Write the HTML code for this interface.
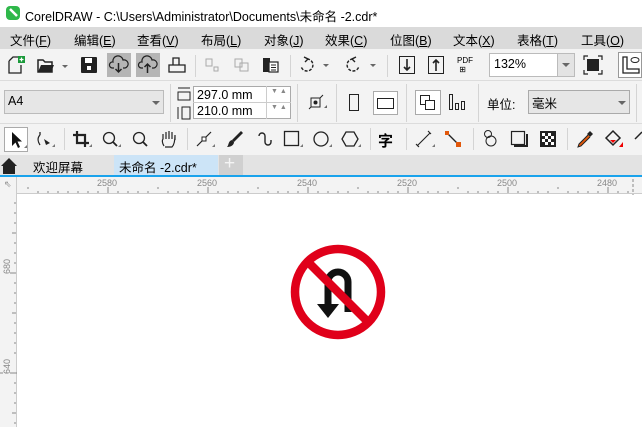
<!DOCTYPE html>
<html><head><meta charset="utf-8">
<style>
*{margin:0;padding:0;box-sizing:border-box}
body{width:642px;height:427px;overflow:hidden;background:#fff;font-family:"Liberation Sans","Noto Sans CJK SC",sans-serif;font-size:12px;color:#000;position:relative}
.a{position:absolute}
.t{position:absolute;white-space:nowrap}
.sep{position:absolute;width:1px;background:#d4d4d4}
svg{position:absolute;overflow:visible}
</style></head><body>
<!-- title bar -->
<div class="a" style="left:0;top:0;width:642px;height:27px;background:#fff"></div>
<div class="a" style="left:6px;top:6px;width:14px;height:14px;border-radius:4px;background:#2fb84a"></div>
<svg style="left:6px;top:6px" width="14" height="14"><path d="M4 3 L11 10" stroke="#fff" stroke-width="2.5"/></svg>
<div class="t" style="left:25px;top:6px;font-size:12.5px">CorelDRAW - C:\Users\Administrator\Documents\未命名 -2.cdr*</div>
<!-- menu -->
<div class="a" style="left:0;top:27px;width:642px;height:22px;background:#dadada"></div>
<div class="t" style="left:10px;top:30px;font-size:12.5px">文件(<u>F</u>)</div>
<div class="t" style="left:74px;top:30px;font-size:12.5px">编辑(<u>E</u>)</div>
<div class="t" style="left:137px;top:30px;font-size:12.5px">查看(<u>V</u>)</div>
<div class="t" style="left:201px;top:30px;font-size:12.5px">布局(<u>L</u>)</div>
<div class="t" style="left:264px;top:30px;font-size:12.5px">对象(<u>J</u>)</div>
<div class="t" style="left:325px;top:30px;font-size:12.5px">效果(<u>C</u>)</div>
<div class="t" style="left:390px;top:30px;font-size:12.5px">位图(<u>B</u>)</div>
<div class="t" style="left:453px;top:30px;font-size:12.5px">文本(<u>X</u>)</div>
<div class="t" style="left:517px;top:30px;font-size:12.5px">表格(<u>T</u>)</div>
<div class="t" style="left:581px;top:30px;font-size:12.5px">工具(<u>O</u>)</div>
<!-- toolbar 1 -->
<div class="a" style="left:0;top:49px;width:642px;height:32px;background:#f3f3f3;border-bottom:1px solid #dcdcdc"></div>
<svg style="left:8px;top:56px" width="18" height="18"><path d="M1 5 L5 1 L10 1 M1 5 V17 H13 V9" fill="none" stroke="#222" stroke-width="1.3"/><rect x="10" y="0" width="7" height="7" fill="#1a9a3a"/><path d="M13.5 1.5v4M11.5 3.5h4" stroke="#fff" stroke-width="1.2"/></svg>
<svg style="left:37px;top:58px" width="30" height="16"><path d="M1 2 H6 L8 4 H15 V14 H1 Z" fill="none" stroke="#222" stroke-width="1.5"/><path d="M1 14 L4 7 H17 L14 14" fill="#222"/><path d="M25 7 L31 7 L28 10Z" fill="#666"/></svg>
<svg style="left:81px;top:57px" width="16" height="16"><rect x="0" y="0" width="16" height="16" rx="1" fill="#222"/><rect x="4" y="1" width="7" height="5" fill="#fff"/><rect x="6" y="9" width="4" height="4" fill="#fff"/></svg>
<div class="a" style="left:107px;top:53px;width:24px;height:24px;background:#b5b5b5"></div>
<svg style="left:109px;top:56px" width="20" height="18"><path d="M5 12 H3 A3 3 0 0 1 4 6 A5 5 0 0 1 14 4 A4 4 0 0 1 16 12 H14" fill="none" stroke="#222" stroke-width="1.2"/><path d="M9.5 7 V16 M6.5 13 L9.5 16 L12.5 13" fill="none" stroke="#222" stroke-width="1.5"/></svg>
<div class="a" style="left:136px;top:53px;width:24px;height:24px;background:#b5b5b5"></div>
<svg style="left:138px;top:56px" width="20" height="18"><path d="M5 12 H3 A3 3 0 0 1 4 6 A5 5 0 0 1 14 4 A4 4 0 0 1 16 12 H14" fill="none" stroke="#222" stroke-width="1.2"/><path d="M9.5 17 V8 M6.5 11 L9.5 8 L12.5 11" fill="none" stroke="#222" stroke-width="1.5"/></svg>
<svg style="left:168px;top:57px" width="18" height="16"><path d="M5 8 V1 H11 V8 M1 8 H17 V15 H1 Z" fill="none" stroke="#222" stroke-width="1.3"/></svg>
<div class="sep" style="left:195px;top:55px;height:22px"></div>
<svg style="left:205px;top:58px" width="14" height="14"><path d="M1 1 H7 V8 H1 Z M9 9 H13 V13 H9Z" fill="none" stroke="#aaa"/></svg>
<svg style="left:234px;top:58px" width="16" height="14"><path d="M1 1 H8 V9 H1 Z M6 5 H14 V13 H6Z" fill="none" stroke="#aaa"/></svg>
<svg style="left:263px;top:57px" width="16" height="16"><rect x="0" y="1" width="7" height="14" fill="#222"/><rect x="6" y="5" width="9" height="10" fill="#fff" stroke="#222" stroke-width="1.2"/><path d="M8 8h5M8 10.5h5M8 13h5" stroke="#222"/></svg>
<div class="sep" style="left:290px;top:55px;height:22px"></div>
<svg style="left:299px;top:57px" width="30" height="16"><path d="M8 2 A6 6 0 1 1 2 9" fill="none" stroke="#222" stroke-width="1.4" stroke-dasharray="3 1.5"/><path d="M5 0 L9 2 L6 5" fill="none" stroke="#222" stroke-width="1.4"/><path d="M24 7 L30 7 L27 10Z" fill="#666"/></svg>
<svg style="left:345px;top:57px" width="30" height="16"><path d="M8 2 A6 6 0 1 0 14 9" fill="none" stroke="#222" stroke-width="1.4" stroke-dasharray="3 1.5"/><path d="M11 0 L7 2 L10 5" fill="none" stroke="#222" stroke-width="1.4"/><path d="M25 7 L31 7 L28 10Z" fill="#666"/></svg>
<div class="sep" style="left:387px;top:55px;height:22px"></div>
<svg style="left:399px;top:56px" width="16" height="18"><rect x="0.5" y="0.5" width="15" height="17" fill="none" stroke="#222"/><path d="M8 3 V14 M5 11 L8 14 L11 11" fill="none" stroke="#222" stroke-width="1.6"/></svg>
<svg style="left:428px;top:56px" width="16" height="18"><rect x="0.5" y="0.5" width="15" height="17" fill="none" stroke="#222"/><path d="M8 15 V4 M5 7 L8 4 L11 7" fill="none" stroke="#222" stroke-width="1.6"/></svg>
<div class="t" style="left:457px;top:56px;font-size:8px;line-height:9px">PDF<br>&nbsp;⊞</div>
<div class="a" style="left:489px;top:53px;width:86px;height:24px;background:#fff;border:1px solid #bbb"></div>
<div class="a" style="left:557px;top:54px;width:17px;height:22px;background:#e3e3e3;border-left:1px solid #bbb"></div>
<svg style="left:562px;top:63px" width="8" height="4"><path d="M0 0H8L4 4Z" fill="#666"/></svg>
<div class="t" style="left:494px;top:57px;font-size:12.5px">132%</div>
<svg style="left:584px;top:56px" width="18" height="18"><path d="M0 4V0H4M14 0H18V4M18 14V18H14M4 18H0V14" fill="none" stroke="#222" stroke-width="1.2"/><rect x="3" y="3" width="12" height="12" fill="#222"/></svg>
<div class="a" style="left:618px;top:52px;width:24px;height:26px;background:#fff;border:1px solid #999"></div>
<svg style="left:622px;top:56px" width="18" height="18"><path d="M1 1V17H17V13H5V1Z" fill="none" stroke="#222" stroke-width="1.3"/><ellipse cx="13" cy="4" rx="4" ry="2.5" fill="none" stroke="#222"/></svg>
<!-- toolbar 2 -->
<div class="a" style="left:0;top:81px;width:642px;height:43px;background:#f3f3f3;border-bottom:1px solid #dcdcdc"></div>
<div class="a" style="left:4px;top:90px;width:160px;height:24px;background:#e6e6e6;border:1px solid #bbb"></div>
<div class="t" style="left:8px;top:94px;font-size:12.5px">A4</div>
<svg style="left:152px;top:101px" width="8" height="4"><path d="M0 0H8L4 4Z" fill="#666"/></svg>
<div class="sep" style="left:170px;top:84px;height:38px"></div>
<svg style="left:177px;top:87px" width="14" height="34"><path d="M1 1H13M1 5H13V13H1Z" fill="none" stroke="#222"/><path d="M1 20V32M5 20H13V32H5Z" fill="none" stroke="#222"/></svg>
<div class="a" style="left:193px;top:86px;width:98px;height:33px;background:#fff;border:1px solid #aaa"></div>
<div class="a" style="left:193px;top:102px;width:98px;height:1px;background:#ccc"></div>
<div class="a" style="left:266px;top:86px;width:1px;height:33px;background:#ccc"></div>
<div class="t" style="left:197px;top:88px;font-size:12.5px">297.0 mm</div>
<div class="t" style="left:197px;top:104px;font-size:12.5px">210.0 mm</div>
<div class="t" style="left:271px;top:88px;font-size:7px;color:#888">▼ ▲</div>
<div class="t" style="left:271px;top:104px;font-size:7px;color:#888">▼ ▲</div>
<div class="sep" style="left:297px;top:84px;height:38px"></div>
<svg style="left:308px;top:94px" width="20" height="18"><rect x="3" y="4" width="9" height="9" fill="none" stroke="#222"/><circle cx="7.5" cy="8.5" r="2" fill="#222"/><path d="M1 15L3 13M12 4L15 1" stroke="#222"/><path d="M16 14L19 14L19 11Z" fill="#666"/></svg>
<div class="sep" style="left:336px;top:84px;height:38px"></div>
<svg style="left:349px;top:94px" width="10" height="17"><rect x="0.5" y="0.5" width="9" height="16" fill="none" stroke="#222"/></svg>
<div class="a" style="left:373px;top:91px;width:25px;height:24px;background:#fff;border:1px solid #aaa"></div>
<svg style="left:377px;top:98px" width="17" height="11"><rect x="0.5" y="0.5" width="16" height="10" fill="none" stroke="#222"/></svg>
<div class="sep" style="left:406px;top:84px;height:38px"></div>
<div class="a" style="left:415px;top:90px;width:26px;height:25px;background:#fff;border:1px solid #aaa"></div>
<svg style="left:420px;top:95px" width="16" height="16"><rect x="0.5" y="0.5" width="9" height="9" fill="none" stroke="#222"/><rect x="5.5" y="5.5" width="9" height="9" fill="#fff" stroke="#222"/></svg>
<svg style="left:449px;top:94px" width="16" height="16"><rect x="0.5" y="0.5" width="3" height="15" fill="none" stroke="#222"/><rect x="6.5" y="9.5" width="3" height="6" fill="none" stroke="#222"/><rect x="12.5" y="7.5" width="3" height="8" fill="none" stroke="#222"/></svg>
<div class="sep" style="left:478px;top:84px;height:38px"></div>
<div class="t" style="left:487px;top:94px;font-size:12.5px">单位:</div>
<div class="a" style="left:528px;top:90px;width:102px;height:24px;background:#e6e6e6;border:1px solid #aaa"></div>
<div class="t" style="left:532px;top:93px;font-size:12.5px">毫米</div>
<svg style="left:618px;top:101px" width="8" height="4"><path d="M0 0H8L4 4Z" fill="#666"/></svg>
<div class="sep" style="left:636px;top:84px;height:38px"></div>
<!-- toolbar 3 -->
<div class="a" style="left:0;top:124px;width:642px;height:31px;background:#f3f3f3"></div>
<div class="a" style="left:4px;top:127px;width:24px;height:25px;background:#fff;border:1px solid #aaa"></div>
<svg style="left:10px;top:131px" width="16" height="18"><path d="M2 1V15L5.5 11.5L8 17L10 16L7.5 10.5H12Z" fill="#111"/><path d="M14 17H17V14Z" fill="#777"/></svg>
<svg style="left:36px;top:131px" width="20" height="18"><path d="M4 1V4M4 4C1 7 2 11 4 14" fill="none" stroke="#222" stroke-width="1.3"/><path d="M8 8L14 12L10 14Z" fill="#222"/><path d="M16 16H19V13Z" fill="#777"/></svg>
<div class="sep" style="left:64px;top:128px;height:22px"></div>
<svg style="left:73px;top:131px" width="20" height="18"><path d="M4 0V12H16M0 4H12V16" fill="none" stroke="#222" stroke-width="2.2"/><path d="M16 16H19V13Z" fill="#777"/></svg>
<svg style="left:102px;top:131px" width="20" height="18"><circle cx="7" cy="7" r="5.5" fill="none" stroke="#222" stroke-width="1.3"/><path d="M11 11L15 15" stroke="#222" stroke-width="1.8"/><path d="M16 16H19V13Z" fill="#777"/></svg>
<svg style="left:132px;top:131px" width="18" height="18"><circle cx="7" cy="7" r="5.5" fill="none" stroke="#222" stroke-width="1.3"/><path d="M11 11L15 15" stroke="#222" stroke-width="1.8"/></svg>
<svg style="left:160px;top:130px" width="18" height="18"><path d="M4 16C2 13 2 10 3 9V4M6 9V2M9 9V1M12 9V2M15 10V5C15 12 14 15 12 17H5" fill="none" stroke="#222" stroke-width="1.2"/></svg>
<div class="sep" style="left:187px;top:128px;height:22px"></div>
<svg style="left:196px;top:131px" width="20" height="18"><path d="M1 15L15 1" stroke="#222" stroke-width="1.2"/><rect x="6" y="6" width="4" height="4" fill="#fff" stroke="#222"/><path d="M16 16H19V13Z" fill="#777"/></svg>
<svg style="left:226px;top:130px" width="20" height="18"><path d="M15 1L17 3L8 12L6 10Z" fill="#222"/><path d="M6 10C2 11 3 15 1 17C5 17 8 15 8 12Z" fill="#222"/></svg>
<svg style="left:255px;top:130px" width="20" height="18"><path d="M4 6A3 3 0 0 1 10 6V12A3 3 0 0 0 16 12V10" fill="none" stroke="#222" stroke-width="1.4"/></svg>
<svg style="left:284px;top:131px" width="20" height="18"><rect x="0.5" y="0.5" width="14" height="14" fill="none" stroke="#222" stroke-width="1.3"/><path d="M16 16H19V13Z" fill="#777"/></svg>
<svg style="left:313px;top:131px" width="20" height="18"><circle cx="8" cy="8" r="7" fill="none" stroke="#222" stroke-width="1.3"/><path d="M16 16H19V13Z" fill="#777"/></svg>
<svg style="left:342px;top:131px" width="20" height="18"><path d="M4 1H12L16 8L12 15H4L0 8Z" fill="none" stroke="#222" stroke-width="1.3"/><path d="M16 16H19V13Z" fill="#777"/></svg>
<div class="sep" style="left:370px;top:128px;height:22px"></div>
<div class="t" style="left:378px;top:130px;font-size:15px;font-weight:bold">字</div>
<div class="sep" style="left:406px;top:128px;height:22px"></div>
<svg style="left:416px;top:131px" width="20" height="18"><path d="M1 15L14 2M0 13L3 16M12 0L15 3" stroke="#222" stroke-width="1.1" fill="none"/><path d="M16 16H19V13Z" fill="#777"/></svg>
<svg style="left:445px;top:131px" width="20" height="18"><path d="M2 2L13 13" stroke="#222" stroke-width="1.3"/><rect x="0" y="0" width="4" height="4" fill="#e2580b"/><rect x="11" y="11" width="5" height="5" fill="#e2580b"/></svg>
<div class="sep" style="left:473px;top:128px;height:22px"></div>
<svg style="left:482px;top:130px" width="20" height="18"><circle cx="6" cy="4" r="3.5" fill="none" stroke="#222"/><circle cx="9" cy="11" r="5" fill="none" stroke="#222"/></svg>
<svg style="left:511px;top:131px" width="20" height="18"><rect x="0.5" y="0.5" width="13" height="13" fill="none" stroke="#222" stroke-width="1.2"/><path d="M3 15H16V3" fill="none" stroke="#222" stroke-width="2"/></svg>
<svg style="left:540px;top:131px" width="16" height="16"><rect width="16" height="16" fill="#222"/><path d="M2 2h3v3H2zM8 2h3v3H8zM5 5h3v3H5zM11 5h3v3h-3zM2 8h3v3H2zM8 8h3v3H8zM5 11h3v3H5zM11 11h3v3h-3z" fill="#fff"/></svg>
<div class="sep" style="left:567px;top:128px;height:22px"></div>
<svg style="left:577px;top:130px" width="20" height="18"><path d="M13 1L16 4L13 7L10 4Z" fill="#222"/><path d="M11 5L2 14L1 17L4 16L13 7" fill="#e2580b" stroke="#222"/></svg>
<svg style="left:605px;top:130px" width="20" height="18"><path d="M1 8L8 1L15 8L8 15Z" fill="none" stroke="#222" stroke-width="1.5"/><path d="M5 10L11 10L8 13Z" fill="#e00"/><path d="M14 17H18V12Z" fill="#e00"/></svg>
<svg style="left:634px;top:131px" width="10" height="16"><path d="M1 8L8 1" stroke="#222" stroke-width="1.5"/></svg>
<!-- tabs -->
<div class="a" style="left:0;top:155px;width:642px;height:20px;background:#e3e3e3"></div>
<svg style="left:1px;top:158px" width="16" height="16"><path d="M8 0L16 8H14V16H2V8H0Z" fill="#222"/></svg>
<div class="t" style="left:33px;top:157px;font-size:12.5px">欢迎屏幕</div>
<div class="a" style="left:114px;top:155px;width:104px;height:20px;background:#cce4f7"></div>
<div class="t" style="left:119px;top:157px;font-size:12.5px">未命名 -2.cdr*</div>
<div class="a" style="left:219px;top:155px;width:24px;height:20px;background:#d0d0d0"></div>
<div class="t" style="left:224px;top:153px;font-size:19px;color:#f4f4f4">+</div>
<div class="a" style="left:0;top:175px;width:642px;height:2px;background:#1aa3ec"></div>
<!-- rulers -->
<div class="a" style="left:0;top:177px;width:642px;height:17px;background:#f3f3f3;border-bottom:1px solid #ccc"></div>
<div class="a" style="left:0;top:177px;width:17px;height:250px;background:#f3f3f3;border-right:1px solid #ccc"></div>
<div class="t" style="left:4px;top:179px;font-size:9px;color:#888">⇖</div>
<div class="t" style="left:97px;top:178px;font-size:9px;color:#888">2580</div>
<div class="t" style="left:197px;top:178px;font-size:9px;color:#888">2560</div>
<div class="t" style="left:297px;top:178px;font-size:9px;color:#888">2540</div>
<div class="t" style="left:397px;top:178px;font-size:9px;color:#888">2520</div>
<div class="t" style="left:497px;top:178px;font-size:9px;color:#888">2500</div>
<div class="t" style="left:597px;top:178px;font-size:9px;color:#888">2480</div>
<svg style="left:0;top:177px" width="642" height="250">
<g stroke="#888" stroke-width="1">
<path d="M28 10v2M38 14v2M48 14v2M58 14v2M68 14v2M78 14v2M88 14v2M98 14v2M108 10v6M118 14v2M128 14v2M138 14v2M148 14v2M158 10v2M168 14v2M178 14v2M188 14v2M198 14v2M208 10v6M218 14v2M228 14v2M238 14v2M248 14v2M258 10v2M268 14v2M278 14v2M288 14v2M298 14v2M308 10v6M318 14v2M328 14v2M338 14v2M348 14v2M358 10v2M368 14v2M378 14v2M388 14v2M398 14v2M408 10v6M418 14v2M428 14v2M438 14v2M448 14v2M458 10v2M468 14v2M478 14v2M488 14v2M498 14v2M508 10v6M518 14v2M528 14v2M538 14v2M548 14v2M558 10v2M568 14v2M578 14v2M588 14v2M598 14v2M608 10v6M618 14v2M628 14v2"/>
<path d="M14 26h2M14 36h2M14 46h2M12 56h4M14 66h2M14 76h2M14 86h2M10 96h6M14 106h2M14 116h2M14 126h2M12 136h4M14 146h2M14 156h2M14 166h2M14 176h2M10 196h6M14 206h2M14 216h2M14 226h2M12 236h4M14 246h2"/>
<path d="M633 2v16" stroke-dasharray="3 2"/>
<path d="M0 196h17" stroke-dasharray="3 2"/>
</g>
<text transform="translate(10,97) rotate(-90)" font-size="9" fill="#888" font-family="Liberation Sans">680</text>
<text transform="translate(10,197) rotate(-90)" font-size="9" fill="#888" font-family="Liberation Sans">640</text>
</svg>
<!-- sign -->
<svg style="left:290px;top:244px" width="96" height="96" viewBox="0 0 96 96">
<circle cx="48" cy="48" r="43" fill="#fff" stroke="#e0001a" stroke-width="8.5"/>
<path d="M38 64 V38 A10 10 0 0 1 58 38 V68" fill="none" stroke="#111" stroke-width="7"/>
<path d="M27 60 H49 L38 74 Z" fill="#111"/>
<path d="M18 18 L78 78" stroke="#e0001a" stroke-width="8.5"/>
</svg>
</body></html>
